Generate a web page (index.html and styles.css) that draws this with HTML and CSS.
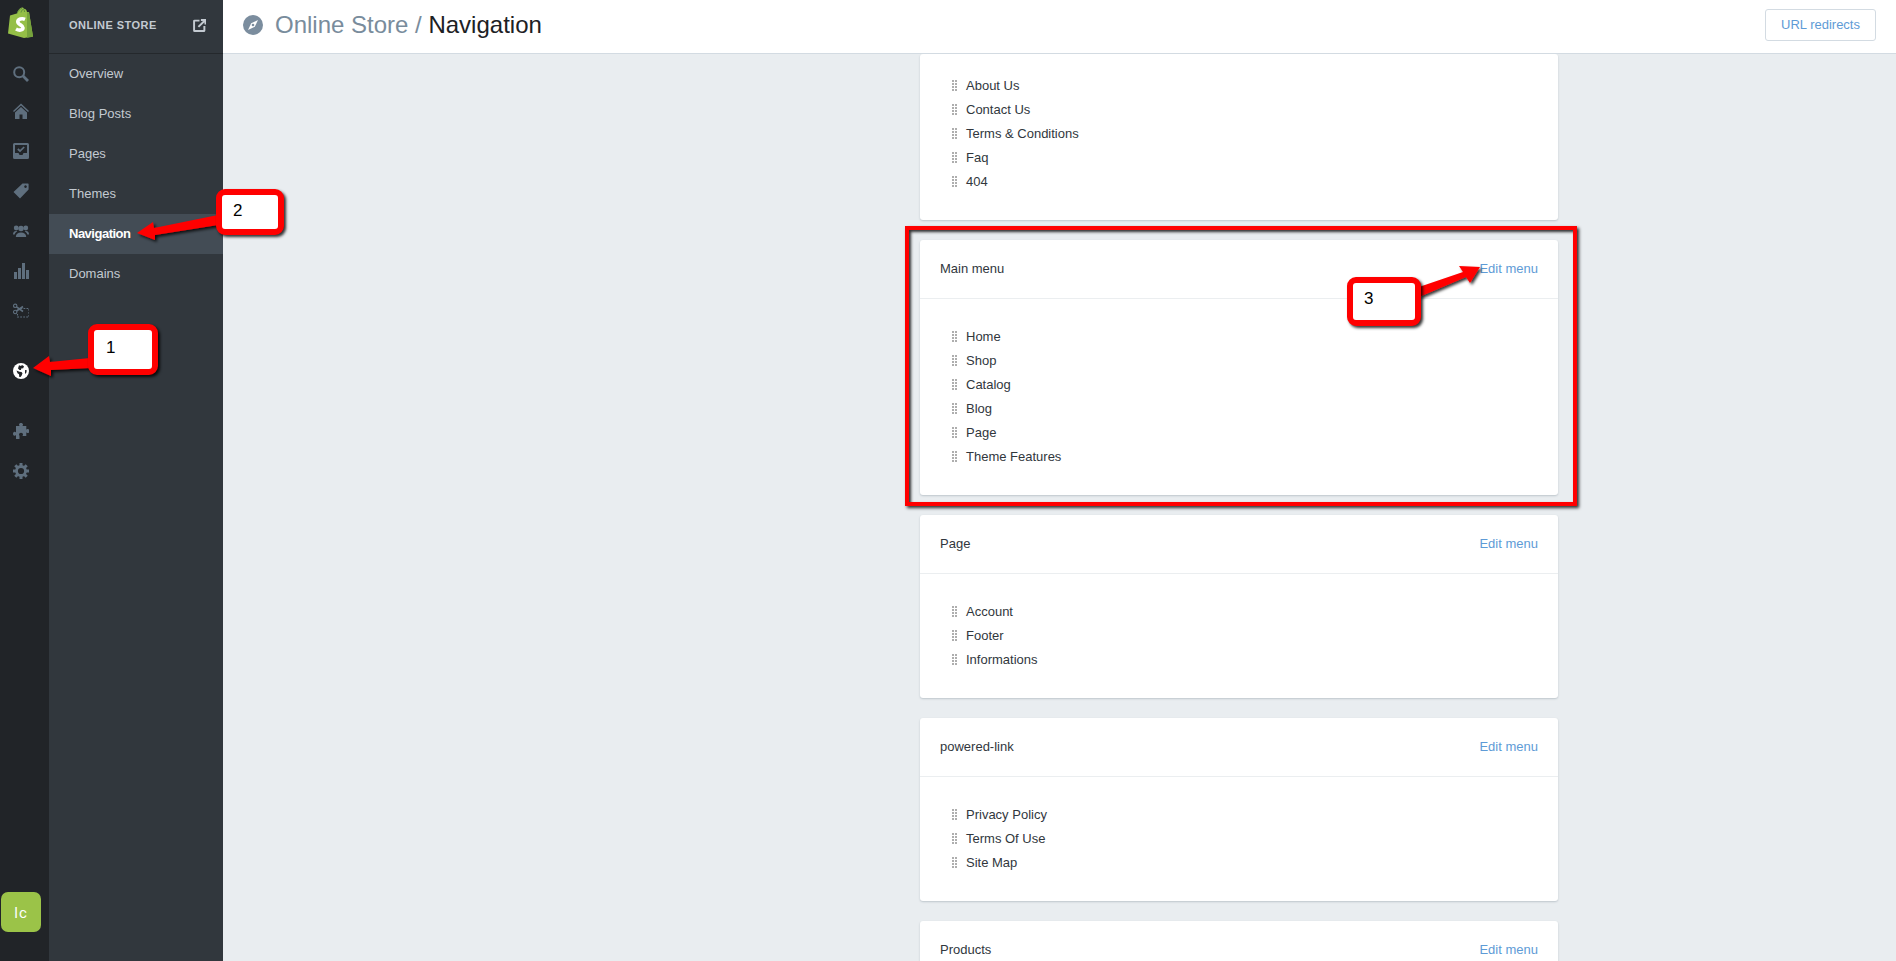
FILE: index.html
```html
<!DOCTYPE html>
<html lang="en">
<head>
<meta charset="utf-8">
<title>Online Store / Navigation</title>
<link rel="stylesheet" href="styles.css">
</head>
<body>
<aside class="rail">
  <a class="logo"><svg width="28" height="32" viewBox="0 0 28 32"><path d="M3 9.500 8 8l2-.6C11 4 13 1.500 15 1.500c1 0 1.600.5 2 1.300 1.500 0 2.500 1.200 3 3.200l2 .1 4 24.400-9 1.500L1 27.500Z" fill="#95bf47"/><path d="M20 6.200 22 6.300l4 24.400-6 1Z" fill="#76a33c"/><path d="M10 7.500C11 5 13 2.500 15 2.500M14 6.500c.5-1.800 1.500-3.500 3-3.500M17.500 6c0-1-.2-2-.5-2.500" fill="none" stroke="#5e8e3e" stroke-width="1"/><path d="M18 13.300C15 12 10.800 13 10.800 15.800c0 3 5.200 3.200 5.200 6 0 2.700-4 2.900-7 1.200" fill="none" stroke="#fff" stroke-width="3.600"/></svg></a>
  <a class="rail-item rail-search"><svg class="ico" viewBox="0 0 16 16"><circle cx="6.200" cy="6.200" r="5" fill="none" stroke="currentColor" stroke-width="2"/><path d="M9.800 9.800 15 15" stroke="currentColor" stroke-width="2.800"/></svg></a>
  <a class="rail-item"><svg class="ico" viewBox="0 0 16 16"><path d="M8 .5 0 8l1 1 7-6.500L15 9l1-1Z M8 4 2 9.500V16h4.500v-4.500h3V16H14V9.500Z" fill="currentColor"/></svg></a>
  <a class="rail-item"><svg class="ico" viewBox="0 0 16 16"><path d="M1.500 0h13A1.500 1.500 0 0 1 16 1.500v13a1.500 1.500 0 0 1-1.500 1.500h-13A1.500 1.500 0 0 1 0 14.500v-13A1.500 1.500 0 0 1 1.500 0ZM2 2v8h3.500l1 2h3l1-2H14V2Z" fill="currentColor" fill-rule="evenodd"/><path d="M4.800 6 7 8l4.200-4" fill="none" stroke="currentColor" stroke-width="1.700"/></svg></a>
  <a class="rail-item"><svg class="ico" viewBox="0 0 16 16"><path d="M9.500 0.500H15a.6.600 0 0 1 .6.600v5.500L7 15.500.5 9ZM12.500 2.300a1.300 1.300 0 1 0 .01 0Z" fill="currentColor" fill-rule="evenodd"/></svg></a>
  <a class="rail-item"><svg class="ico" viewBox="0 0 16 16"><circle cx="8" cy="5.500" r="2.800" fill="currentColor"/><path d="M2.800 14c0-3 2-4.500 5.200-4.500s5.200 1.500 5.200 4.500Z" fill="currentColor"/><circle cx="3.200" cy="5" r="2.400" fill="currentColor"/><circle cx="12.800" cy="5" r="2.400" fill="currentColor"/><path d="M0 11.500c0-2.200 1-3.500 3-3.500.6 0 1 .1 1.300.3C2.800 9.300 2 10.300 1.700 11.500ZM16 11.500c0-2.200-1-3.500-3-3.500-.6 0-1 .1-1.300.3 1.500 1 2.300 2 2.600 3.200Z" fill="currentColor"/></svg></a>
  <a class="rail-item"><svg class="ico" viewBox="0 0 16 16"><path d="M1 9h3v7H1ZM5 5h3v11H5ZM9 0h3v16H9ZM13 7h3v9h-3Z" fill="currentColor"/></svg></a>
  <a class="rail-item"><svg class="ico" viewBox="0 0 16 16"><g fill="none" stroke="currentColor" stroke-width="1.100"><circle cx="2.200" cy="2.800" r="1.700"/><circle cx="2.200" cy="9" r="1.700"/><path d="M3.500 3.800 10 8.500M3.500 8 10 3.500" stroke-width="1.600"/><path d="M7.500 5.500H16v8.500H4.500V11" stroke-dasharray="1.800 1.200"/></g></svg></a>
  <a class="rail-item rail-active rail-gap"><svg class="ico" viewBox="0 0 16 16"><circle cx="8" cy="8" r="8" fill="#fff"/><path d="M6 2.200 8 3l1-1 2 1.200-.8 2-2 .3-.2 1.500H6.500L5 5.500ZM3.500 7.500l3 1.200 2 .3 1 1.300-.8 2.200-1.200 1.500H6.300L6 11.300l-1.500-1ZM12 7l1.800.3-.5 2.500-1.300 1.200Z" fill="#212428"/></svg></a>
  <a class="rail-item rail-gap"><svg class="ico" viewBox="0 0 16 16"><path d="M6 1.500C6 .5 7 0 8 0s2 .6 2 1.500c0 .7-.5 1-.5 1.500h3.800v3.500c.5 0 .8-.5 1.500-.5 1 0 1.700 1 1.700 2s-.7 2-1.700 2c-.7 0-1-.5-1.500-.5V13H9.500c0-.5.500-.8.500-1.500 0-1-1-1.700-2-1.700s-2 .7-2 1.700c0 .7.500 1 .5 1.500v3H3v-3.800c-.5 0-.8.500-1.500.500-.9 0-1.500-1-1.500-2s.6-2 1.500-2c.7 0 1 .5 1.500.5V3h3.500C6.500 2.500 6 2.200 6 1.500Z" fill="currentColor"/></svg></a>
  <a class="rail-item"><svg class="ico" viewBox="0 0 16 16"><circle cx="8" cy="8" r="4.500" fill="none" stroke="currentColor" stroke-width="2.800"/><path d="M8 0v3M8 13v3M0 8h3M13 8h3M2.300 2.300l2.200 2.200M11.500 11.500l2.200 2.200M2.300 13.700l2.200-2.200M11.500 4.500l2.200-2.200" stroke="currentColor" stroke-width="3"/></svg></a>
  <div class="avatar">lc</div>
</aside>
<nav class="subnav">
  <header class="subnav-head">
    <span>ONLINE STORE</span>
    <svg class="ext" viewBox="0 0 12 12"><path d="M6 1.500H1.500a.5.500 0 0 0-.5.500v8.500a.5.500 0 0 0 .5.500H10a.5.500 0 0 0 .5-.5V6.500" fill="none" stroke="currentColor" stroke-width="1.800"/><path d="M5 7.300 10.500 1.800M7.300 .9H11.500V5" fill="none" stroke="currentColor" stroke-width="1.800"/></svg>
  </header>
  <a class="sub-item">Overview</a>
  <a class="sub-item">Blog Posts</a>
  <a class="sub-item">Pages</a>
  <a class="sub-item">Themes</a>
  <a class="sub-item sub-active">Navigation</a>
  <a class="sub-item">Domains</a>
</nav>
<div class="main">
  <header class="topbar">
    <svg class="compass" viewBox="0 0 20 20"><circle cx="10" cy="10" r="10" fill="#7b8d9e"/><path d="M15 5 11.800 11.800 5 15 8.200 8.200Z" fill="#fff"/><circle cx="10" cy="10" r="1.300" fill="#7b8d9e"/></svg>
    <h1 class="title"><span class="crumb">Online Store / </span>Navigation</h1>
    <a class="btn">URL redirects</a>
  </header>
  <div class="content">
    <section class="card">
      <ul class="list list-cut">
        <li><i class="grip"></i>About Us</li>
        <li><i class="grip"></i>Contact Us</li>
        <li><i class="grip"></i>Terms &amp; Conditions</li>
        <li><i class="grip"></i>Faq</li>
        <li><i class="grip"></i>404</li>
      </ul>
    </section>
    <section class="card">
      <div class="card-head"><span>Main menu</span><a class="edit">Edit menu</a></div>
      <ul class="list">
        <li><i class="grip"></i>Home</li>
        <li><i class="grip"></i>Shop</li>
        <li><i class="grip"></i>Catalog</li>
        <li><i class="grip"></i>Blog</li>
        <li><i class="grip"></i>Page</li>
        <li><i class="grip"></i>Theme Features</li>
      </ul>
    </section>
    <section class="card">
      <div class="card-head"><span>Page</span><a class="edit">Edit menu</a></div>
      <ul class="list">
        <li><i class="grip"></i>Account</li>
        <li><i class="grip"></i>Footer</li>
        <li><i class="grip"></i>Informations</li>
      </ul>
    </section>
    <section class="card">
      <div class="card-head"><span>powered-link</span><a class="edit">Edit menu</a></div>
      <ul class="list">
        <li><i class="grip"></i>Privacy Policy</li>
        <li><i class="grip"></i>Terms Of Use</li>
        <li><i class="grip"></i>Site Map</li>
      </ul>
    </section>
    <section class="card">
      <div class="card-head"><span>Products</span><a class="edit">Edit menu</a></div>
    </section>
  </div>
</div>
<div class="redbox"></div>
<svg class="arrows" width="1896" height="961" viewBox="0 0 1896 961">
  <defs><filter id="ds" x="-20%" y="-40%" width="140%" height="180%"><feDropShadow dx="2" dy="2" stdDeviation="1.500" flood-color="#000" flood-opacity=".8"/></filter></defs>
  <path filter="url(#ds)" fill="#f00" d="M33 368 49 356 50 362 90 358 90 368 51 370 51 376Z"/>
  <path filter="url(#ds)" fill="#f00" d="M137 233 153 222 154 228 218 215 218 225 155 235 155 240Z"/>
  <path filter="url(#ds)" fill="#f00" d="M1480 267 1459 266 1463 272 1419 287 1419 297 1466 277 1470 283Z"/>
</svg>
<div class="note note-1">1</div>
<div class="note note-2">2</div>
<div class="note note-3">3</div>
</body>
</html>
```
FILE: styles.css
```css
* { box-sizing: border-box; }
html, body { margin: 0; height: 100%; }
body {
  display: flex;
  height: 961px;
  overflow: hidden;
  position: relative;
  background: #e9edf0;
  font-family: "Liberation Sans", Arial, sans-serif;
  font-size: 13px;
  color: #31373d;
}
.rail {
  flex: 0 0 49px;
  display: flex;
  flex-direction: column;
  padding-right: 7px;
  background: #212428;
  color: #5f6f7e;
}
.logo { height: 57px; display: flex; justify-content: center; padding-top: 6px; }
.rail-item { height: 40px; display: flex; align-items: center; justify-content: center; }
.rail-search { height: 34px; }
.rail-active { color: #fff; }
.rail-gap { margin-top: 20px; }
.ico { width: 16px; height: 16px; }
.avatar {
  width: 40px;
  height: 40px;
  margin: auto 0 29px 1px;
  border-radius: 7px;
  background: #9bc348;
  color: #fff;
  font-family: Roboto, sans-serif;
  font-size: 15px;
  letter-spacing: 1px;
  line-height: 42px;
  text-align: center;
}
.subnav { flex: 0 0 174px; background: #31373d; color: #c3cad1; }
.subnav-head {
  height: 54px;
  padding: 0 17px 3px 20px;
  display: flex;
  align-items: center;
  justify-content: space-between;
  border-bottom: 1px solid #24282c;
  font-size: 11px;
  font-weight: 700;
  letter-spacing: .45px;
}
.ext { width: 13px; height: 13px; }
.sub-item { display: block; height: 40px; padding-left: 20px; line-height: 40px; font-size: 13px; }
.sub-active { background: #434c55; color: #fff; font-weight: 700; letter-spacing: -.5px; }
.main { flex: 1; min-width: 0; display: flex; flex-direction: column; }
.topbar {
  height: 54px;
  flex: none;
  display: flex;
  align-items: center;
  padding: 0 20px 3px 20px;
  background: #fff;
  border-bottom: 1px solid #d3dbe2;
}
.compass { width: 20px; height: 20px; margin-right: 12px; }
.title { margin: 0; flex: 1; font-size: 24px; font-weight: 400; color: #1d2124; }
.crumb { color: #798c9c; }
.btn {
  width: 111px;
  height: 32px;
  border: 1px solid #d3dbe2;
  border-radius: 3px;
  color: #5e9bd6;
  line-height: 30px;
  text-align: center;
  font-size: 13px;
}
.content { flex: 1; min-height: 0; overflow: hidden; display: flex; flex-direction: column; gap: 20px; padding-left: 697px; }
.card {
  flex: none;
  width: 638px;
  background: #fff;
  border-radius: 3px;
  box-shadow: 0 1px 2px rgba(90,105,120,.3);
}
.card-head {
  height: 59px;
  padding: 0 20px 2px;
  display: flex;
  align-items: center;
  justify-content: space-between;
  border-bottom: 1px solid #ebeef0;
}
.edit { color: #5e9bd6; }
.list { list-style: none; margin: 0; padding: 25px 32px 27px; }
.list-cut { padding-top: 19px; }
.list li { height: 24px; display: flex; align-items: center; }
.grip {
  width: 5px;
  height: 11px;
  margin-right: 9px;
  background:
    repeating-linear-gradient(90deg, transparent 0 2px, #fff 2px 3px),
    repeating-linear-gradient(180deg, #aeaeae 0 2px, #fff 2px 3px);
}
.redbox {
  position: absolute;
  left: 905px;
  top: 226px;
  width: 672px;
  height: 280px;
  border: 4px solid #f00;
  box-shadow: 2px 2px 3px rgba(0,0,0,.8), inset 2px 2px 3px rgba(0,0,0,.8);
}
.arrows { position: absolute; left: 0; top: 0; }
.note {
  position: absolute;
  background: #fff;
  border: 6px solid #f00;
  border-radius: 9px;
  box-shadow: 2px 2px 3px rgba(0,0,0,.8);
  color: #000;
  font-size: 17px;
  line-height: 1;
}
.note-1 { left: 88px; top: 324px; width: 70px; height: 51px; padding: 9px 0 0 12px; }
.note-2 { left: 216px; top: 189px; width: 68px; height: 46px; padding: 7px 0 0 11px; }
.note-3 { left: 1347px; top: 277px; width: 74px; height: 49px; padding: 7px 0 0 11px; }
```
